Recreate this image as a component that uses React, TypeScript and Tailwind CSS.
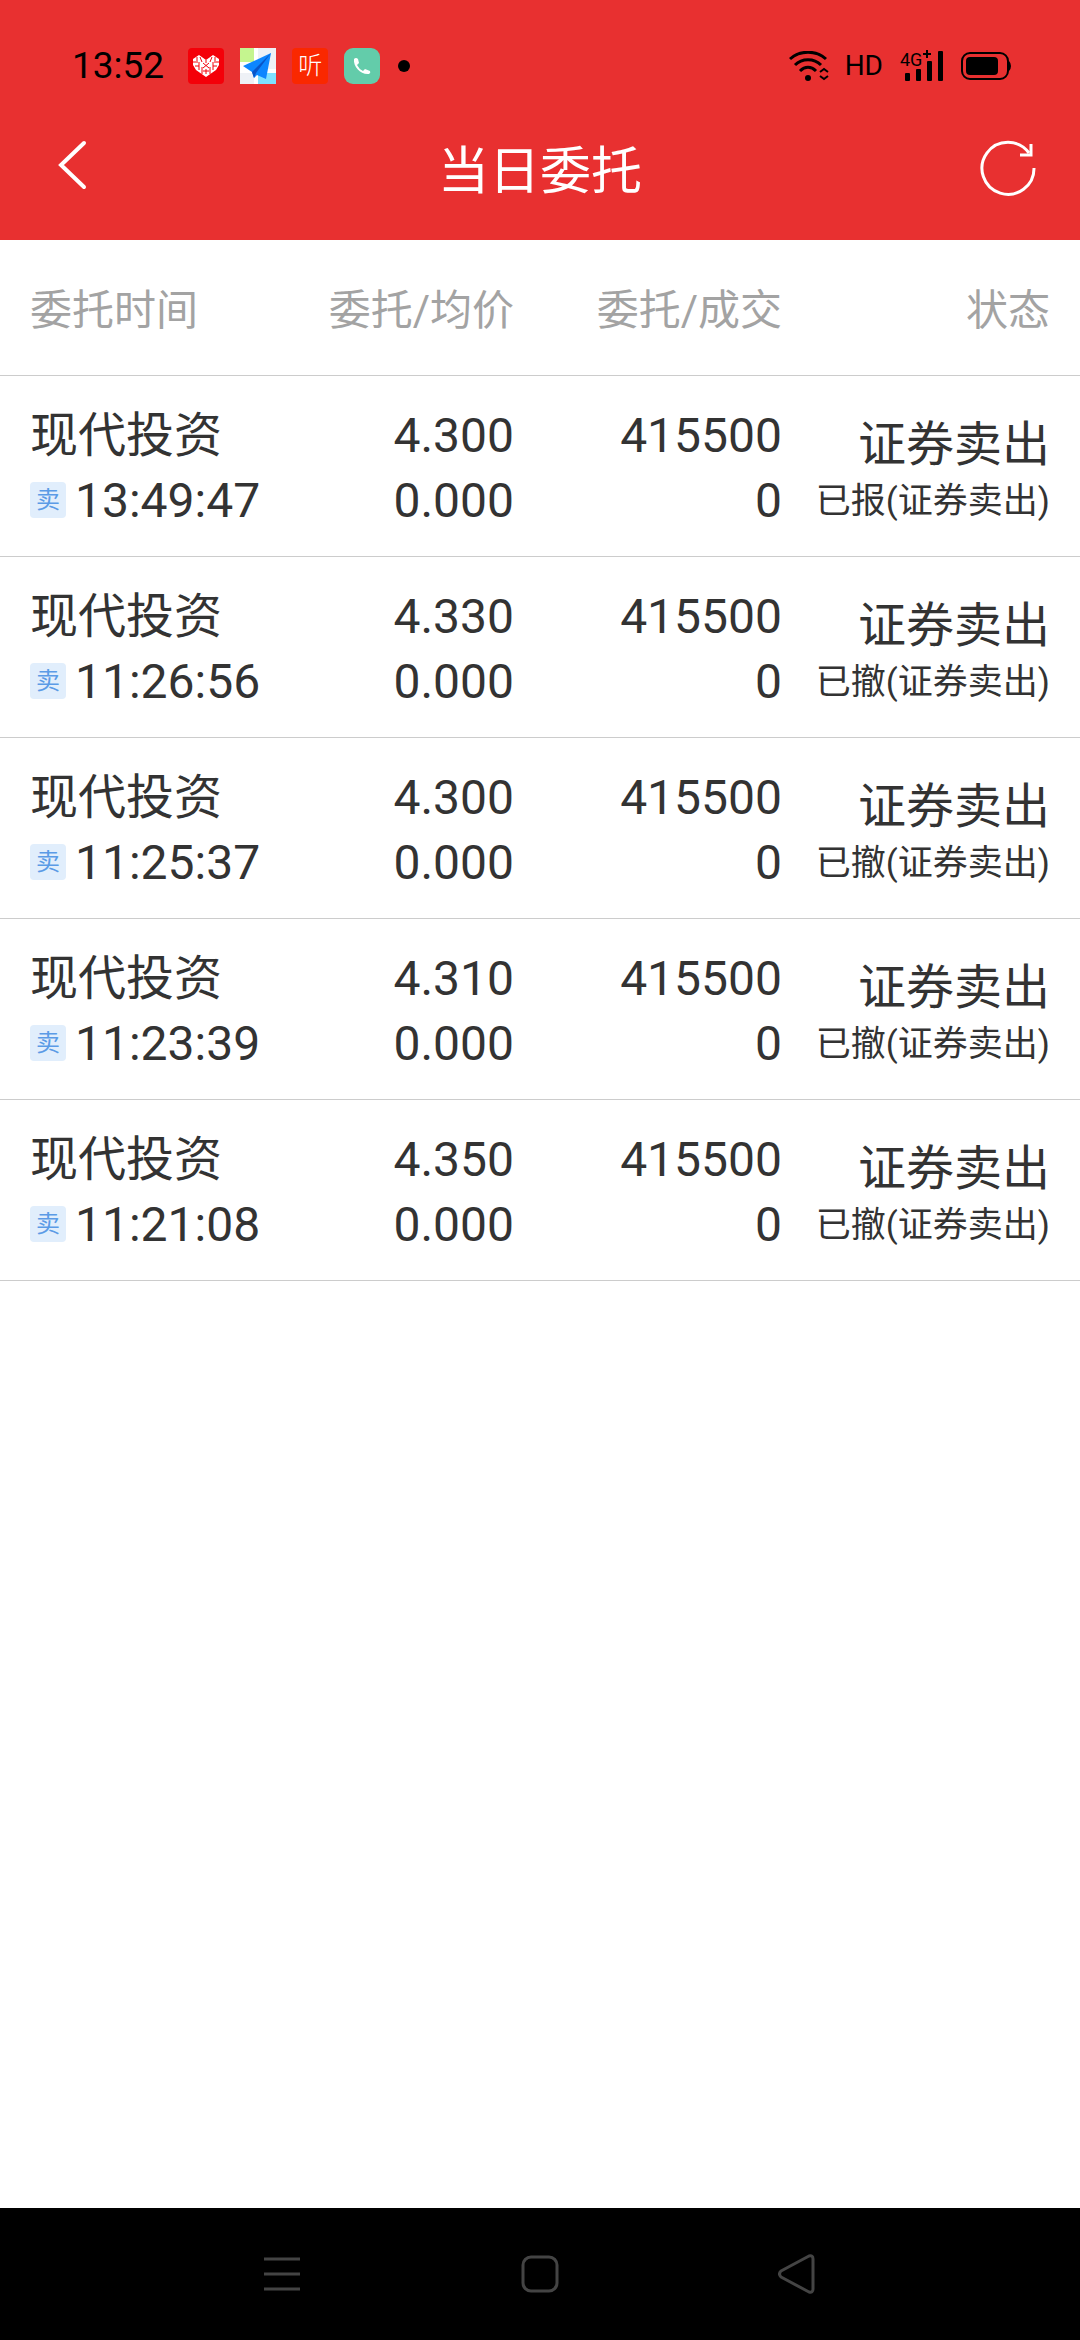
import type { ReactNode } from 'react';

interface Order {
  name: string;
  time: string;
  price: string;
  avgPrice: string;
  amount: string;
  filled: string;
  status: string;
  detail: string;
}

const orders: Order[] = [
  { name: '现代投资', time: '13:49:47', price: '4.300', avgPrice: '0.000', amount: '415500', filled: '0', status: '证券卖出', detail: '已报(证券卖出)' },
  { name: '现代投资', time: '11:26:56', price: '4.330', avgPrice: '0.000', amount: '415500', filled: '0', status: '证券卖出', detail: '已撤(证券卖出)' },
  { name: '现代投资', time: '11:25:37', price: '4.300', avgPrice: '0.000', amount: '415500', filled: '0', status: '证券卖出', detail: '已撤(证券卖出)' },
  { name: '现代投资', time: '11:23:39', price: '4.310', avgPrice: '0.000', amount: '415500', filled: '0', status: '证券卖出', detail: '已撤(证券卖出)' },
  { name: '现代投资', time: '11:21:08', price: '4.350', avgPrice: '0.000', amount: '415500', filled: '0', status: '证券卖出', detail: '已撤(证券卖出)' },
];

function ShopIcon() {
  return (
    <svg viewBox="0 0 36 36" className="size-9">
      <rect width="36" height="36" rx="4" fill="#f40009" />
      <path d="M18 29 L8 22 L5 17 V11 L11 7 L18 12 L25 7 L31 11 V17 L28 22 Z" fill="#fff" />
      <path
        d="M9 9v4M27 9v4M5 14h5M26 14h5M12 9l2 5M24 9l-2 5M11 14v8M25 14v8M7 18h4M25 18h4M14 19v7M22 19v7M15 15l6 5M21 15l-6 5M15 23h6M18 12v3M18 21v5"
        stroke="#f40009"
        strokeWidth="1"
        fill="none"
      />
    </svg>
  );
}

function MapIcon() {
  return (
    <svg viewBox="0 0 36 36" className="size-9">
      <rect width="36" height="36" fill="#fff" />
      <rect width="14" height="14" fill="#c5f58f" />
      <rect x="18" width="18" height="21" fill="#eef1f6" />
      <rect y="25" width="14" height="11" fill="#eef1f6" />
      <rect x="18" y="25" width="18" height="11" fill="#7ee0ff" />
      <path d="M31 5 L3 18 L12 24 L14 30 L17 27 L26 31 Z" fill="#0d86ff" />
      <path d="M31 5 L12 24 L14 30 L16 25 Z" fill="#0a55c8" />
    </svg>
  );
}

function PhoneIcon() {
  return (
    <svg viewBox="0 0 36 36" className="size-9">
      <rect width="36" height="36" rx="9" fill="#63ccaa" />
      <path
        d="M10 11 Q12 9 14 11 L15 15 L13 17 Q15 21 19 23 L21 21 L26 23 Q27 25 25 26 C17 27 9 19 10 11 Z"
        fill="#fff"
      />
    </svg>
  );
}

function ListenIcon() {
  return (
    <span className="flex size-9 items-center justify-center rounded bg-[#fa2800] text-2xl leading-none font-light text-white">
      听
    </span>
  );
}

function WifiIcon() {
  return (
    <svg viewBox="0 0 40 30" className="h-[30px] w-10" fill="none" stroke="#000">
      <path d="M1 8 C11 -1 27 -1 37 8" strokeWidth="3" />
      <path d="M6 14 C13 7 25 7 32 14" strokeWidth="3" />
      <path d="M11 20 C16 15 22 15 27 20" strokeWidth="3" />
      <circle cx="19" cy="27" r="3" fill="#000" stroke="none" />
      <path d="M31 21 L35 18 L39 21 M31 25 L35 28 L39 25" strokeWidth="2" />
    </svg>
  );
}

function SignalIcon() {
  return (
    <svg viewBox="0 0 46 36" className="h-9 w-[46px]">
      <text x="1" y="18" fontSize="18" fontFamily="Roboto, sans-serif">4G</text>
      <path d="M24 6h8M28 2v8" stroke="#000" strokeWidth="2" />
      <rect x="6" y="25" width="5" height="8" rx="1" />
      <rect x="17" y="21" width="5" height="12" rx="1" />
      <rect x="28" y="13" width="5" height="20" rx="1" />
      <rect x="39" y="3" width="5" height="30" rx="1" />
    </svg>
  );
}

function BatteryIcon() {
  return (
    <svg viewBox="0 0 50 28" className="h-7 w-[50px]">
      <rect x="1" y="1" width="46" height="26" rx="8" fill="none" stroke="#000" strokeWidth="2" />
      <rect x="5" y="5" width="32" height="18" rx="4" />
      <path d="M48 9 Q50 11 50 14 Q50 17 48 19 Z" />
    </svg>
  );
}

function StatusBar() {
  return (
    <div className="flex h-[92px] items-center justify-between pt-10 pr-[69px] pl-[72px] text-black">
      <div className="flex items-center gap-4">
        <span className="mr-2 text-[37px] leading-9">13:52</span>
        <ShopIcon />
        <MapIcon />
        <ListenIcon />
        <PhoneIcon />
        <span className="ml-0.5 size-3 rounded-full bg-black" />
      </div>
      <div className="flex items-center gap-4">
        <WifiIcon />
        <span className="text-[28px] leading-8">HD</span>
        <SignalIcon />
        <BatteryIcon />
      </div>
    </div>
  );
}

function TwoLineCell({ className, top, bottom }: { className: string; top: string; bottom: ReactNode }) {
  return (
    <td className={`align-top leading-[65px] whitespace-nowrap ${className}`}>
      <div className="mt-[27px]">{top}</div>
      <div>{bottom}</div>
    </td>
  );
}

export default function App() {
  return (
    <div className="flex min-h-screen flex-col bg-white font-[Roboto,'Noto_Sans_CJK_SC',sans-serif] text-[#333333]">
      <header className="bg-[#e83030]">
        <StatusBar />
        <div className="flex h-[148px] items-center justify-between px-11 pt-1 text-white">
          <button type="button" aria-label="返回">
            <svg viewBox="0 0 56 56" className="size-14" fill="none" stroke="currentColor" strokeWidth="4" strokeLinecap="round">
              <path d="M40 3 L17 25 L40 47" />
            </svg>
          </button>
          <h1 className="pt-2 text-[51px] leading-[60px]">当日委托</h1>
          <button type="button" aria-label="刷新">
            <svg viewBox="0 0 56 56" className="size-14" fill="none" stroke="currentColor" strokeWidth="3">
              <path d="M54 28 A26 26 0 1 1 49 13" />
              <path d="M51 4 V15 H40" />
            </svg>
          </button>
        </div>
      </header>

      <main className="flex-1">
        <table className="w-full table-fixed border-collapse text-5xl">
          <thead>
            <tr className="h-[135px] border-b border-[#cccccc] text-[42px] text-[#a3a3a3]">
              <th scope="col" className="pt-2 pl-[30px] text-left font-normal">委托时间</th>
              <th scope="col" className="pt-2 pr-[26px] text-right font-normal">委托/均价</th>
              <th scope="col" className="pt-2 pr-7 text-right font-normal">委托/成交</th>
              <th scope="col" className="pt-2 pr-[30px] text-right font-normal">状态</th>
            </tr>
          </thead>
          <tbody>
            {orders.map((order) => (
              <tr key={order.time} className="h-[181px] border-b border-[#cccccc]">
                <TwoLineCell
                  className="pl-[30px]"
                  top={order.name}
                  bottom={
                    <span className="flex items-center gap-[9px]">
                      <span className="flex size-9 items-center justify-center rounded-sm bg-[#e1eefc] text-2xl leading-none text-[#5b9be6]">
                        卖
                      </span>
                      {order.time}
                    </span>
                  }
                />
                <TwoLineCell className="pr-[26px] text-right" top={order.price} bottom={order.avgPrice} />
                <TwoLineCell className="pr-7 text-right" top={order.amount} bottom={order.filled} />
                <td className="pr-[30px] text-right align-top whitespace-nowrap">
                  <div className="mt-9 leading-[65px]">{order.status}</div>
                  <div className="text-[35px] leading-[50px]">{order.detail}</div>
                </td>
              </tr>
            ))}
          </tbody>
        </table>
      </main>

      <nav className="flex h-33 items-center justify-between bg-black px-[262px] text-[#444444]">
        <button type="button" aria-label="最近任务">
          <svg viewBox="0 0 40 40" className="size-10" fill="none" stroke="currentColor" strokeWidth="3">
            <path d="M2 5h36M2 20h36M2 35h36" />
          </svg>
        </button>
        <button type="button" aria-label="主屏幕">
          <svg viewBox="0 0 40 40" className="size-10" fill="none" stroke="currentColor" strokeWidth="3">
            <rect x="3" y="3" width="34" height="34" rx="8" />
          </svg>
        </button>
        <button type="button" aria-label="后退">
          <svg viewBox="0 0 40 40" className="size-10" fill="none" stroke="currentColor" strokeWidth="3" strokeLinejoin="round">
            <path d="M31 2 L3 17 Q0 20 3 23 L31 38 Q35 39 35 35 V5 Q35 1 31 2 Z" />
          </svg>
        </button>
      </nav>
    </div>
  );
}
